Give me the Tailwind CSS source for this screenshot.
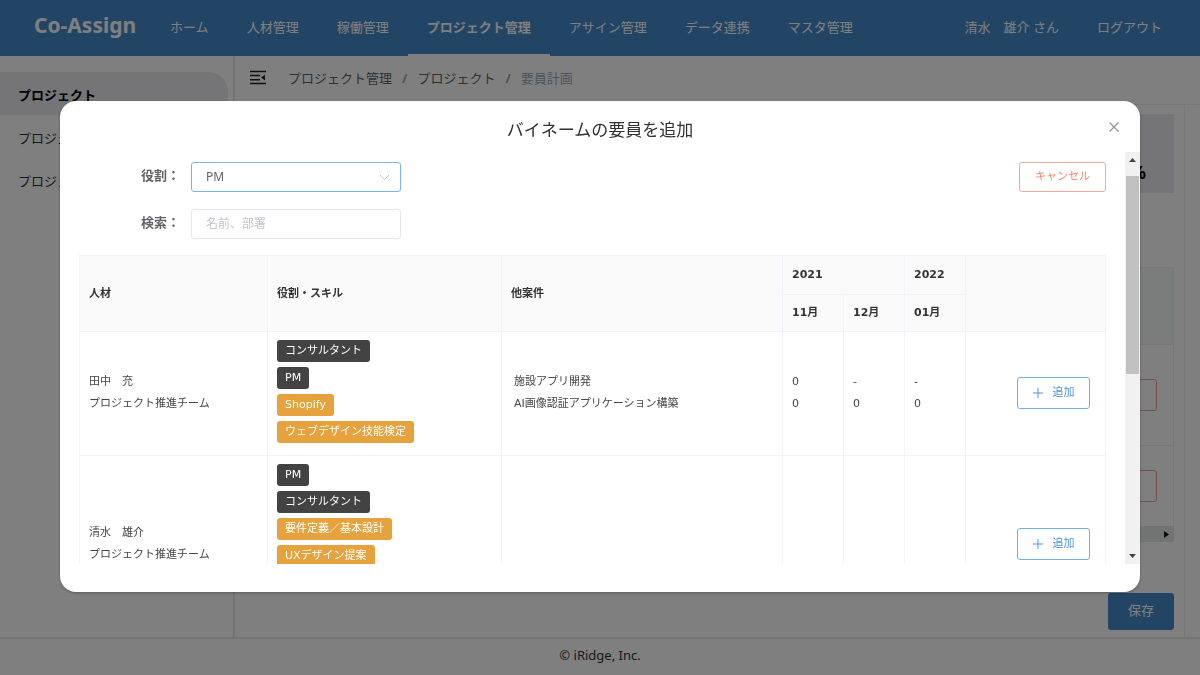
<!DOCTYPE html>
<html lang="ja">
<head>
<meta charset="utf-8">
<meta name="viewport" content="width=device-width, initial-scale=1">
<title>Co-Assign</title>
<script src="https://cdn.jsdelivr.net/npm/@tailwindcss/browser@4"></script>
</head>
<body class="h-screen overflow-hidden bg-white font-['Noto_Sans','Noto_Sans_CJK_JP',sans-serif] text-[13px] leading-5 text-[#303133]">

<div class="flex h-full flex-col">
  <header class="flex h-14 shrink-0 items-stretch bg-[#448bca] pr-[19px] pl-[34px] text-white">
    <a href="#" class="mr-[15px] flex w-[102px] items-center pb-[6px] text-[21px] font-bold whitespace-nowrap">Co-Assign</a>
    <nav class="flex items-stretch whitespace-nowrap">
      <a href="#" class="flex items-center px-[19px] pb-[2px]">ホーム</a>
      <a href="#" class="flex items-center px-[19px] pb-[2px]">人材管理</a>
      <a href="#" class="flex items-center px-[19px] pb-[2px]">稼働管理</a>
      <a href="#" class="flex items-center border-b-2 border-white px-[19px] font-bold" aria-current="page">プロジェクト管理</a>
      <a href="#" class="flex items-center px-[19px] pb-[2px]">アサイン管理</a>
      <a href="#" class="flex items-center px-[19px] pb-[2px]">データ連携</a>
      <a href="#" class="flex items-center px-[19px] pb-[2px]">マスタ管理</a>
    </nav>
    <div class="ml-auto flex items-stretch whitespace-nowrap">
      <a href="#" class="flex items-center px-[19px] pb-[2px]">清水　雄介 さん</a>
      <a href="#" class="flex items-center px-[19px] pb-[2px]">ログアウト</a>
    </div>
  </header>

  <div class="flex min-h-0 flex-1">
    <aside class="w-[235px] shrink-0 border-r-2 border-[#e6e6e6] pt-4 pr-[5px]">
      <ul>
        <li><a href="#" class="flex h-[43px] items-center rounded-tr-[20px] bg-[#eaeaee] pt-[2px] pl-[18px] font-bold text-black">プロジェクト</a></li>
        <li><a href="#" class="flex h-[43px] items-center pt-[2px] pl-[18px]">プロジェクト一覧</a></li>
        <li><a href="#" class="flex h-[43px] items-center pt-[2px] pl-[18px]">プロジェクト登録</a></li>
      </ul>
    </aside>

    <div class="flex min-w-0 flex-1 flex-col">
      <div class="flex h-[49px] shrink-0 items-center border-b border-[#eaeef0] pb-1 pl-[15px]">
        <button type="button" aria-label="メニュー" class="mr-[22px]">
          <svg class="h-4 w-4" viewBox="0 0 16 16" fill="none" stroke="#222" stroke-width="1.5"><path d="M0 1.5h16M0 5.6h10M0 9.7h10M0 13.6h16"/><path d="M15 4.8v5.6l-4-2.8z" fill="#222" stroke="none"/></svg>
        </button>
        <nav class="flex gap-[10px] text-[#606266]" aria-label="パンくず">
          <a href="#">プロジェクト管理</a><span class="font-bold text-[#a0a4ac]">/</span>
          <a href="#">プロジェクト</a><span class="font-bold text-[#a0a4ac]">/</span>
          <span class="text-[#97a8be]">要員計画</span>
        </nav>
      </div>
      <main class="mr-[15px] flex-1 border-r border-[#eaeef0] pt-[9px] pr-[10px] pl-4">
        <div class="flex h-[79px] items-end justify-end bg-[#eaeaee] pr-7 pb-[7px] text-lg font-bold text-black">%</div>
        <div class="mt-[74px] border-r border-[#ebeef5]">
          <div class="h-[78px] border-y border-[#ebeef5] bg-[#f4f7f7]"></div>
          <div class="flex h-[101px] items-center justify-end border-b border-[#ebeef5] pr-4">
            <button type="button" aria-label="削除" class="h-8 w-[72px] rounded-[3px] border border-[#ea9d8f]"></button>
          </div>
          <div class="flex h-20 items-center justify-end pr-4">
            <button type="button" aria-label="削除" class="h-8 w-[72px] rounded-[3px] border border-[#ea9d8f]"></button>
          </div>
        </div>
        <div class="flex h-4 items-center justify-end bg-[#e4e6e6] pr-[5px]">
          <svg class="h-[7px] w-[5px]" viewBox="0 0 5 7"><path d="M0 0l5 3.500-5 3.500z" fill="#111"/></svg>
        </div>
        <div class="mt-[51px] flex justify-end">
          <button type="button" class="h-[37px] w-[66px] rounded-[3px] bg-[#448bca] pb-[3px] text-white">保存</button>
        </div>
      </main>
    </div>
  </div>

  <footer class="h-[38px] shrink-0 border-t-2 border-[#e6e6e6] pt-[6px] text-center">© iRidge, Inc.</footer>
</div>

<div class="fixed inset-0 flex flex-col bg-black/50 px-[60px] pt-[101px] pb-[83px]">
  <section role="dialog" aria-modal="true" aria-labelledby="dialog-title" class="flex min-h-0 flex-1 flex-col overflow-hidden rounded-2xl bg-white pb-7 shadow-[0_1px_3px_rgba(0,0,0,0.3)]">
    <div class="flex h-[51px] shrink-0 items-center pr-5 pl-[51px]">
      <h2 id="dialog-title" class="flex-1 pt-[6px] text-center text-[17px] leading-6 text-[#303133]">バイネームの要員を追加</h2>
      <button type="button" aria-label="閉じる" class="flex w-[31px] justify-end pt-px">
        <svg class="h-3 w-3" viewBox="0 0 12 12" fill="none" stroke="#909399" stroke-width="1.200"><path d="M1.500 1.500l9 9M10.500 1.500l-9 9"/></svg>
      </button>
    </div>

    <div class="flex min-h-0 flex-1">
      <div class="min-w-0 flex-1 overflow-hidden px-[19px]">
        <div class="flex items-start justify-between pt-[10px]">
          <div class="grid grid-cols-[101px_210px] gap-x-[11px] gap-y-[17px] text-[#606266]">
            <label for="role" class="text-right leading-[26px] font-bold">役割：</label>
            <div class="relative">
              <select id="role" class="h-[30px] w-full appearance-none rounded-[3px] border border-[#79b4f2] bg-white pb-px pl-[14px] text-xs text-[#606266]"><option>PM</option></select>
              <svg class="pointer-events-none absolute top-3 right-[11px] h-[7px] w-[11px]" viewBox="0 0 11 7" fill="none" stroke="#c0c4cc"><path d="M1 1l4.500 4.500L10 1"/></svg>
            </div>
            <label for="search" class="text-right leading-[26px] font-bold">検索：</label>
            <input id="search" type="text" placeholder="名前、部署" class="h-[30px] w-full rounded-[3px] border border-[#e4e6eb] pl-[14px] pb-[2px] text-xs placeholder:text-[#c0c4cc]">
          </div>
          <button type="button" class="h-[30px] w-[87px] rounded-[3px] border border-[#f2a998] pb-[2px] text-[11px] text-[#ef8a6c]">キャンセル</button>
        </div>

        <table class="mt-4 w-full table-fixed border-collapse text-left font-['DejaVu_Sans','Noto_Sans_CJK_JP',sans-serif] text-[11px] leading-[22px] text-[#454545] [&_td]:border [&_td]:border-[#f2f3f8] [&_th]:border [&_th]:border-[#f2f3f8] [&_td]:pb-[2px] [&_td]:pl-[9px] [&_th]:pl-[9px]">
          <colgroup>
            <col class="w-[188px]"><col class="w-[234px]"><col><col class="w-[61px]"><col class="w-[61px]"><col class="w-[61px]"><col class="w-[140px]">
          </colgroup>
          <thead class="bg-[#fafafa] text-[#333]">
            <tr class="h-[39px]">
              <th rowspan="2">人材</th>
              <th rowspan="2">役割・スキル</th>
              <th rowspan="2">他案件</th>
              <th colspan="2">2021</th>
              <th>2022</th>
              <th rowspan="2" aria-label="操作"></th>
            </tr>
            <tr class="h-[37px]">
              <th>11月</th>
              <th>12月</th>
              <th>01月</th>
            </tr>
          </thead>
          <tbody>
            <tr class="h-[124px]">
              <td>田中　充<br>プロジェクト推進チーム</td>
              <td class="pt-2 align-top">
                <div class="flex flex-col items-start gap-[5px] text-white">
                  <span class="rounded-[3px] bg-[#434343] px-2">コンサルタント</span>
                  <span class="rounded-[3px] bg-[#434343] px-2">PM</span>
                  <span class="rounded-[3px] bg-[#e6a23c] px-2">Shopify</span>
                  <span class="rounded-[3px] bg-[#e6a23c] px-2">ウェブデザイン技能検定</span>
                </div>
              </td>
              <td><div class="pl-[3px]">施設アプリ開発<br>AI画像認証アプリケーション構築</div></td>
              <td>0<br>0</td>
              <td>-<br>0</td>
              <td>-<br>0</td>
              <td>
                <div class="flex justify-end pr-[15px]">
                  <button type="button" class="flex h-8 w-[73px] items-center justify-center gap-[10px] rounded-[3px] border border-[#74aee6] text-[#4a94dc]"><svg class="h-[10px] w-[10px]" viewBox="0 0 10 10" stroke="currentColor"><path d="M5 0v10M0 5h10"/></svg>追加</button>
                </div>
              </td>
            </tr>
            <tr class="h-[178px]">
              <td>清水　雄介<br>プロジェクト推進チーム</td>
              <td class="pt-2 align-top">
                <div class="flex flex-col items-start gap-[5px] text-white">
                  <span class="rounded-[3px] bg-[#434343] px-2">PM</span>
                  <span class="rounded-[3px] bg-[#434343] px-2">コンサルタント</span>
                  <span class="rounded-[3px] bg-[#e6a23c] px-2">要件定義／基本設計</span>
                  <span class="rounded-[3px] bg-[#e6a23c] px-2">UXデザイン提案</span>
                </div>
              </td>
              <td></td>
              <td></td>
              <td></td>
              <td></td>
              <td>
                <div class="flex justify-end pr-[15px]">
                  <button type="button" class="flex h-8 w-[73px] items-center justify-center gap-[10px] rounded-[3px] border border-[#74aee6] text-[#4a94dc]"><svg class="h-[10px] w-[10px]" viewBox="0 0 10 10" stroke="currentColor"><path d="M5 0v10M0 5h10"/></svg>追加</button>
                </div>
              </td>
            </tr>
          </tbody>
        </table>
      </div>

      <div class="flex w-[15px] shrink-0 flex-col items-center bg-[#f1f1f1] pt-[6px] pb-[6px]" aria-hidden="true">
        <svg class="h-[4px] w-[7px]" viewBox="0 0 7 4"><path d="M0 4L3.500 0 7 4z" fill="#444"/></svg>
        <div class="mt-[14px] h-[198px] w-[13px] bg-[#c1c1c1]"></div>
        <svg class="mt-auto h-[4px] w-[7px]" viewBox="0 0 7 4"><path d="M0 0l3.500 4L7 0z" fill="#444"/></svg>
      </div>
    </div>
  </section>
</div>

</body>
</html>
